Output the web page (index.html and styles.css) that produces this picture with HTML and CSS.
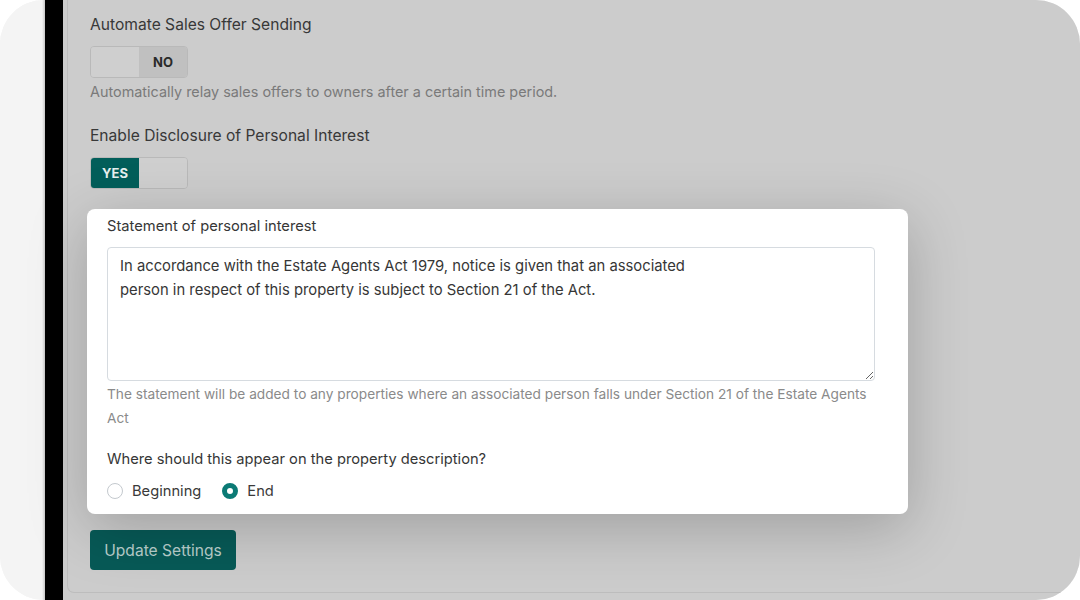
FILE: index.html
```html
<!DOCTYPE html>
<html lang="en">
<head>
<meta charset="utf-8">
<title>Settings</title>
<link rel="stylesheet" href="styles.css">
</head>
<body>
<div class="frame">
  <div class="gutter"></div>
  <div class="bezel"></div>
  <div class="screen">
    <div class="panel">
      <div class="field-label">Automate Sales Offer Sending</div>
      <div class="toggle">
        <span class="toggle-half"></span>
        <span class="toggle-half toggle-off">NO</span>
      </div>
      <div class="help">Automatically relay sales offers to owners after a certain time period.</div>

      <div class="field-label field-gap">Enable Disclosure of Personal Interest</div>
      <div class="toggle">
        <span class="toggle-half toggle-on">YES</span>
        <span class="toggle-half"></span>
      </div>

      <div class="spotlight">
        <label class="card-label" for="statement">Statement of personal interest</label>
        <textarea id="statement" class="statement">In accordance with the Estate Agents Act 1979, notice is given that an associated
person in respect of this property is subject to Section 21 of the Act.</textarea>
        <div class="card-help">The statement will be added to any properties where an associated person falls under Section 21 of the Estate Agents Act</div>
        <div class="card-question">Where should this appear on the property description?</div>
        <div class="radios">
          <label class="radio"><span class="radio-dot"></span>Beginning</label>
          <label class="radio"><span class="radio-dot radio-checked"></span>End</label>
        </div>
      </div>

      <button class="submit">Update Settings</button>
    </div>
  </div>
</div>
</body>
</html>
```

FILE: styles.css
```css
* {
  box-sizing: border-box;
}

html, body {
  margin: 0;
  padding: 0;
  background: #ffffff;
}

body {
  font-family: Inter, "Noto Sans", "Liberation Sans", sans-serif;
  color: #333333;
}

.frame {
  width: 1080px;
  height: 600px;
  border-radius: 44px;
  overflow: hidden;
  background: #f4f4f4;
  display: flex;
}

.gutter {
  width: 45px;
  flex: none;
  background: linear-gradient(to right, #f4f4f4 0, #f4f4f4 42px, #c8c8c8 45px);
}

.bezel {
  width: 18px;
  flex: none;
  background: #000000;
}

.screen {
  flex: 1;
  background: #cccccc;
  display: flex;
  padding: 0 0 7px 4px;
}

.panel {
  flex: 1;
  margin-right: -30px;
  border-left: 1px solid #bdbdbd;
  border-bottom: 1px solid #bdbdbd;
  border-bottom-left-radius: 7px;
  padding: 13px 0 0 22px;
}

.field-label {
  font-size: 15.6px;
  line-height: 24px;
  color: #383838;
}

.field-gap {
  margin-top: 20px;
}

.toggle {
  margin-top: 9px;
  width: 98px;
  height: 32px;
  border: 1px solid #b9b9b9;
  border-radius: 4px;
  overflow: hidden;
  display: flex;
}

.toggle-half {
  flex: 1;
  display: flex;
  align-items: center;
  justify-content: center;
  font-size: 13px;
  font-weight: 700;
  background: #cfcfcf;
  color: #2a2a2a;
}

.toggle-off {
  background: #c0c0c0;
}

.toggle-on {
  background: #025e5a;
  color: #e6efee;
}

.help {
  margin-top: 2px;
  font-size: 14.4px;
  line-height: 24px;
  color: #7a7a7a;
}

.spotlight {
  position: relative;
  z-index: 1;
  margin: 20px 0 0 -3px;
  width: 821px;
  padding: 5px 33px 11px 20px;
  background: #ffffff;
  border-radius: 8px;
  box-shadow: 0 14px 60px rgba(0, 0, 0, 0.22);
}

.card-label {
  display: block;
  font-size: 14.7px;
  line-height: 24px;
  color: #363636;
}

.statement {
  display: block;
  margin-top: 9px;
  width: 768px;
  height: 134px;
  border: 1px solid #d6dbe0;
  border-radius: 4px;
  padding: 6px 12px;
  font-family: Inter, "Noto Sans", "Liberation Sans", sans-serif;
  font-size: 14.8px;
  line-height: 24px;
  color: #363636;
  resize: vertical;
  outline: none;
}

.card-help {
  margin-top: 1px;
  font-size: 13.7px;
  line-height: 24px;
  color: #8a8a8a;
}

.card-question {
  margin-top: 17px;
  font-size: 14.7px;
  line-height: 24px;
  color: #363636;
}

.radios {
  margin-top: 8px;
  display: flex;
  gap: 21px;
  font-size: 14.7px;
  line-height: 24px;
}

.radio {
  display: flex;
  align-items: center;
  gap: 9px;
  color: #3a3a3a;
}

.radio-dot {
  width: 16px;
  height: 16px;
  border-radius: 50%;
  border: 1px solid #c4c9ce;
  background: #ffffff;
}

.radio-checked {
  border: 5px solid #0b7a75;
}

.submit {
  display: block;
  margin-top: 16px;
  width: 146px;
  height: 40px;
  border: none;
  border-radius: 4px;
  background: #075a57;
  color: #b9cfcc;
  font-family: Inter, "Noto Sans", "Liberation Sans", sans-serif;
  font-size: 15.6px;
  padding: 0;
}
```
